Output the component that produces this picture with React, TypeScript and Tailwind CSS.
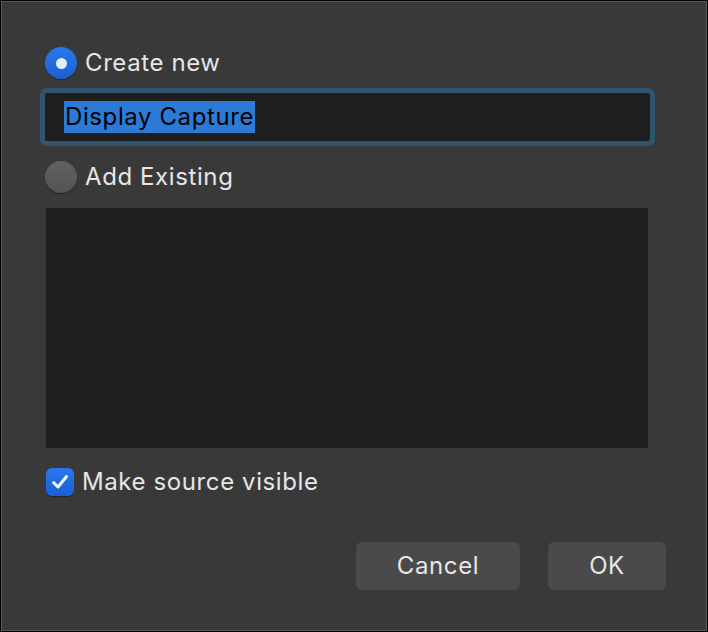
export default function App() {
  const font = { fontFamily: 'Inter, "Liberation Sans", Arial, sans-serif' };

  return (
    <div className="w-[708px] h-[632px] bg-black p-px" style={font}>
      <div className="h-full border border-[#5c5c5c] bg-[#393939] text-[#e6e6e6] tracking-[0.6px] flex flex-col pl-[43px] pr-[40px] pt-[45px]">
        {/* create new */}
        <div className="flex items-center gap-[8px]">
          <span className="w-[32px] h-[32px] rounded-full bg-gradient-to-b from-[#2a78ee] to-[#1a5fd0] flex items-center justify-center shadow-[0_1px_1px_rgba(0,0,0,0.4)]">
            <span className="w-[11px] h-[11px] rounded-full bg-[#e4ecfb]" />
          </span>
          <span className="text-[24px] leading-[32px]">Create new</span>
        </div>

        <div className="mt-[9px] -ml-[5px] mr-[11px] h-[58px] rounded-[7px] border-[5px] border-[#30566f] bg-[#1e1e1e] flex items-center pl-[19px]">
          <span className="bg-[#2a7ad6] text-black text-[24px] leading-[32px] px-[1px]">Display Capture</span>
        </div>

        {/* add existing */}
        <div className="mt-[15px] flex items-center gap-[8px]">
          <span className="w-[32px] h-[32px] rounded-full bg-gradient-to-b from-[#626262] to-[#545454] shadow-[0_1px_1px_rgba(0,0,0,0.4)]" />
          <span className="text-[24px] leading-[32px]">Add Existing</span>
        </div>

        <div className="mt-[15px] ml-[1px] mr-[18px] h-[240px] bg-[#1f1f1f]" />

        {/* visible */}
        <div className="mt-[19px] ml-[1px] flex items-center gap-[8px]">
          <span className="w-[28px] h-[28px] rounded-[6px] bg-gradient-to-b from-[#2a78ee] to-[#1a5fd0] flex items-center justify-center shadow-[0_1px_1px_rgba(0,0,0,0.4)]">
            <svg width="22" height="22" viewBox="0 0 22 22" fill="none">
              <path d="M4.5 11.5 L9 16 L17.5 5.5" stroke="#f2f6fd" strokeWidth="3" strokeLinecap="round" strokeLinejoin="round" />
            </svg>
          </span>
          <span className="text-[24px] leading-[30px]">Make source visible</span>
        </div>

        <div className="mt-[45px] flex justify-end gap-[28px]">
          <button className="w-[164px] h-[48px] rounded-[6px] bg-[#4a4a4a] text-[24px] text-[#e6e6e6]">Cancel</button>
          <button className="w-[118px] h-[48px] rounded-[6px] bg-[#4a4a4a] text-[24px] text-[#e6e6e6]">OK</button>
        </div>
      </div>
    </div>
  );
}
